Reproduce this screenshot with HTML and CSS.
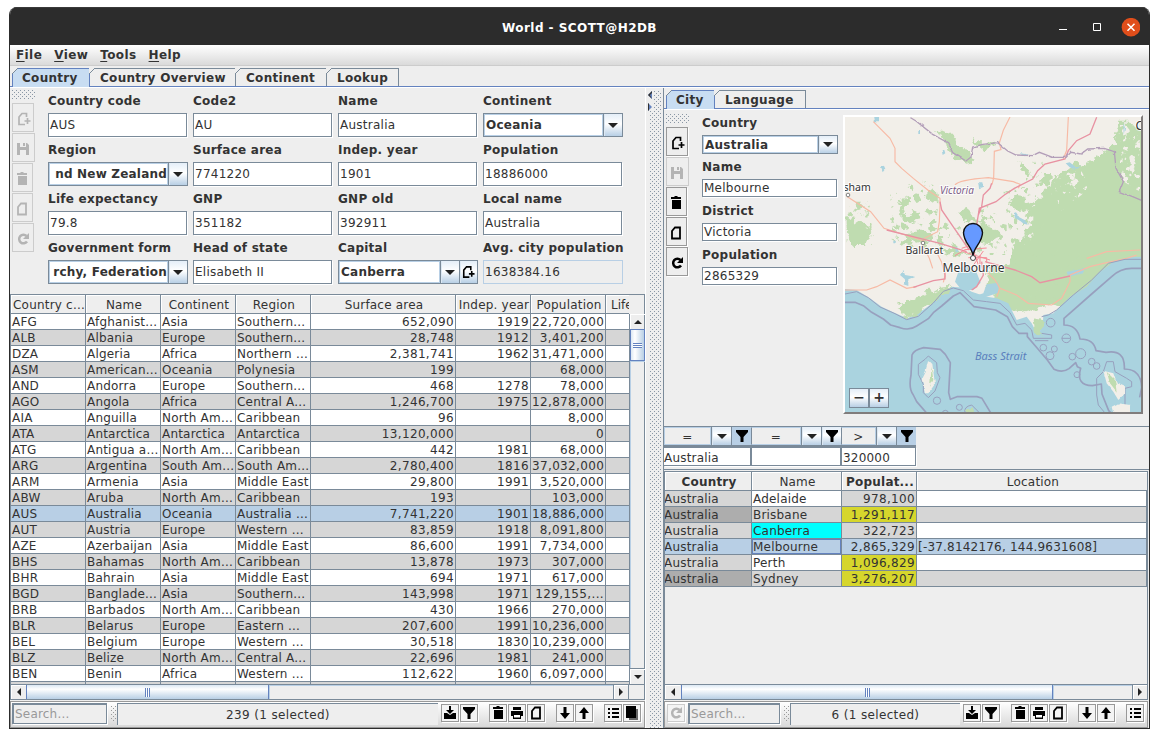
FILE: index.html
```html
<!DOCTYPE html>
<html lang="en">
<head>
<meta charset="utf-8">
<title>World - SCOTT@H2DB</title>
<link rel="stylesheet" href="styles.css">
</head>
<body>
<svg class="defs" width="0" height="0">
  <symbol id="add" viewBox="0 0 16 16"><path d="M10 13.500H4V6l3-3.500h4.500V6M12.500 7v6M9.500 10h6" fill="none" stroke="currentColor" stroke-width="1.700"/></symbol>
  <symbol id="page" viewBox="0 0 16 16"><path d="M4 13.500V6l3-3.500h5v11z" fill="none" stroke="currentColor" stroke-width="1.800"/></symbol>
  <symbol id="save" viewBox="0 0 16 16"><path d="M2 2h3v4h6V2h1l2 2v10h-3V9H5v5H2zM8 2h2v3H8z" fill="currentColor"/></symbol>
  <symbol id="trash" viewBox="0 0 16 16"><path d="M3 2h3l1-1h2l1 1h3v2H3zM4 5h9v9H4z" fill="currentColor"/></symbol>
  <symbol id="reload" viewBox="0 0 16 16"><path d="M11.500 5A4.300 4.300 0 1 0 12 10.500" fill="none" stroke="currentColor" stroke-width="2.500"/><path d="M14 2v6H8z" fill="currentColor"/></symbol>
  <symbol id="import" viewBox="0 0 16 16"><path d="M2 8h3l3 2 3-2h3v6H2zM7 1h2v4h3L8 9 4 5h3z" fill="currentColor"/></symbol>
  <symbol id="funnel" viewBox="0 0 16 16"><path d="M2 2h12v2L9.500 9v5h-3V9L2 4z" fill="currentColor"/></symbol>
  <symbol id="print" viewBox="0 0 16 16"><path d="M4 2h8v3H4zM2 6h12v5h-2v3H4v-3H2z" fill="currentColor"/><path d="M5 10h6v2.500H5z" fill="#fff"/></symbol>
  <symbol id="down" viewBox="0 0 16 16"><path d="M6.500 2h3v6H13l-5 6-5-6h3.500z" fill="currentColor"/></symbol>
  <symbol id="up" viewBox="0 0 16 16"><path d="M6.500 14h3V8H13L8 2 3 8h3.500z" fill="currentColor"/></symbol>
  <symbol id="list" viewBox="0 0 16 16"><path d="M3 3h2v2H3zM7 3h7v2H7zM3 7h2v2H3zM7 7h7v2H7zM3 11h2v2H3zM7 11h7v2H7z" fill="currentColor"/></symbol>
  <symbol id="copies" viewBox="0 0 16 16"><path d="M5 4h9v11H5z" fill="#666"/><path d="M2 1h10v12H2z" fill="currentColor"/></symbol>
  <symbol id="chev" viewBox="0 0 10 5"><path d="M0 0h10L5 5z" fill="#222"/></symbol>
</svg>

<div class="window">
  <header class="titlebar">
    <div class="title">World - SCOTT@H2DB</div>
    <svg class="winbtns" width="84" height="20" viewBox="0 0 84 20"><path d="M3 11.500h8" stroke="#fff"/><path d="M37.500 5.500h7v7h-7z" fill="none" stroke="#fff"/><circle cx="75" cy="9.200" r="9.300" fill="#e04e1b"/><path d="M71.500 5.700l7 7M78.500 5.700l-7 7" stroke="#fff" stroke-width="1.500"/></svg>
  </header>
  <nav class="menubar"><span><u>F</u>ile</span><span><u>V</u>iew</span><span><u>T</u>ools</span><span><u>H</u>elp</span></nav>
  <div class="tabs main-tabs"><div class="tab on w78">Country</div><div class="tab w146">Country Overview</div><div class="tab w91">Continent</div><div class="tab w72">Lookup</div></div>

  <main class="split">
    <section class="left">
      <div class="form-area">
        <div class="tools off">
          <i class="grip"></i>
          <b><svg><use href="#add"/></svg></b><b class="wide"><svg><use href="#save"/></svg></b><b class="slim"><svg><use href="#trash"/></svg></b><b class="slim"><svg><use href="#page"/></svg></b><b><svg><use href="#reload"/></svg></b>
        </div>
        <div class="form">
          <label>Country code<div class="field">AUS</div></label>
          <label>Code2<div class="field">AU</div></label>
          <label>Name<div class="field">Australia</div></label>
          <label>Continent<div class="combo"><div>Oceania</div><em><svg><use href="#chev"/></svg></em></div></label>
          <label>Region<div class="combo"><div class="end">nd New Zealand</div><em><svg><use href="#chev"/></svg></em></div></label>
          <label>Surface area<div class="field">7741220</div></label>
          <label>Indep. year<div class="field">1901</div></label>
          <label>Population<div class="field">18886000</div></label>
          <label>Life expectancy<div class="field">79.8</div></label>
          <label>GNP<div class="field">351182</div></label>
          <label>GNP old<div class="field">392911</div></label>
          <label>Local name<div class="field">Australia</div></label>
          <label>Government form<div class="combo"><div class="end">rchy, Federation</div><em><svg><use href="#chev"/></svg></em></div></label>
          <label>Head of state<div class="field">Elisabeth II</div></label>
          <label>Capital<div class="combo"><div>Canberra</div><em><svg><use href="#chev"/></svg></em><em class="addbtn"><svg><use href="#add"/></svg></em></div></label>
          <label>Avg. city population<div class="field readonly">1638384.16</div></label>
        </div>
      </div>
      <div class="table-box">
        <div class="thead country-cols"><span>Country c...</span><span>Name</span><span>Continent</span><span>Region</span><span>Surface area</span><span>Indep. year</span><span>Population</span><span class="cut">Life</span></div>
        <div class="tbody">
          <div class="rows" id="countries"></div>
          <div class="vscroll"><div class="arrow"><svg width="8" height="4" viewBox="0 0 8 4"><path d="M0 4h8L4 0z"/></svg></div><div class="vthumb"><i></i></div><div class="track"></div><div class="arrow bottom"><svg width="8" height="4" viewBox="0 0 8 4"><path d="M0 0h8L4 4z"/></svg></div></div>
        </div>
        <div class="hscroll"><div class="arrow"><svg width="4" height="8" viewBox="0 0 4 8"><path d="M4 0v8L0 4z"/></svg></div><div class="hthumb w243"><i></i></div><div class="track"></div><div class="arrow"><svg width="4" height="8" viewBox="0 0 4 8"><path d="M0 0v8l4-4z"/></svg></div><div class="corner"></div></div>
      </div>
      <div class="status">
        <div class="search w95">Search...</div><i class="minigrip"></i><div class="count">239 (1 selected)</div>
        <b><svg><use href="#import"/></svg></b><b><svg><use href="#funnel"/></svg></b>
        <b class="sep"><svg><use href="#trash"/></svg></b><b><svg><use href="#print"/></svg></b><b><svg><use href="#page"/></svg></b>
        <b class="sep"><svg><use href="#down"/></svg></b><b><svg><use href="#up"/></svg></b>
        <b class="sep"><svg><use href="#list"/></svg></b><b><svg><use href="#copies"/></svg></b>
      </div>
    </section>

    <div class="divider"><svg width="5" height="20" viewBox="0 0 5 20"><path d="M4 0v8L0 4z" fill="#6382bf"/><path d="M0 4l4-4v2L2 4l2 4z" fill="#333"/><path d="M0 12v8l4-4z" fill="#6382bf"/><path d="M0 12v8l1-1v-6z" fill="#333"/></svg><i></i></div>

    <section class="right">
      <div class="tabs sub-tabs"><div class="tab on w49">City</div><div class="tab w91">Language</div></div>
      <div class="city">
        <div class="tools">
          <i class="grip"></i>
          <b><svg><use href="#add"/></svg></b><b class="wide dis"><svg><use href="#save"/></svg></b><b class="slim"><svg><use href="#trash"/></svg></b><b class="slim"><svg><use href="#page"/></svg></b><b><svg><use href="#reload"/></svg></b>
        </div>
        <div class="city-form">
          <label>Country<div class="combo"><div>Australia</div><em><svg><use href="#chev"/></svg></em></div></label>
          <label>Name<div class="field">Melbourne</div></label>
          <label>District<div class="field">Victoria</div></label>
          <label>Population<div class="field">2865329</div></label>
        </div>
        <div class="map">
          <svg width="296" height="296" viewBox="845 117 296 296">
            <defs>
              <filter id="rough" x="-10%" y="-10%" width="120%" height="120%"><feTurbulence type="fractalNoise" baseFrequency=".04" numOctaves="4" seed="4"/><feDisplacementMap in="SourceGraphic" scale="38" xChannelSelector="R" yChannelSelector="G"/></filter>
              <filter id="wobble" x="-10%" y="-10%" width="120%" height="120%"><feTurbulence type="fractalNoise" baseFrequency=".05" numOctaves="3" seed="9"/><feDisplacementMap in="SourceGraphic" scale="9" xChannelSelector="R" yChannelSelector="G"/></filter>
              <filter id="speckle" x="0" y="0" width="100%" height="100%"><feTurbulence type="fractalNoise" baseFrequency=".045" numOctaves="4" seed="12"/><feColorMatrix values="0 0 0 0 0  0 0 0 0 0  0 0 0 0 0  14 0 0 0 -8"/><feComposite in="SourceGraphic" operator="in"/></filter>
            </defs>
            <rect x="845" y="117" width="296" height="296" fill="#f2efe9"/>
            <g transform="translate(840 105) scale(.33333)">
              <g filter="url(#rough)" fill="#bfdcb0">
                <path d="M915 80l-50-30-30 0-15 60-35 50-20-10-30 30-40-5-45 35-25 55-35 20-25 35-15 40 0 35-35 30-10 55-55 10-10 50 30 60 80 20 70-20 60 10 50-30 30-50 100-20h100z"/>
                <path d="M290 72l45 20 65 75-25 5-40-20zM395 90l20 25 50-5 5 10-60 15zM20 330l25 20 30 10 20 25-20 35-40 0-15-60zM185 330l50-10 10 25-40 10-20-10zM250 265l25-10 20 15-20 20zM200 380l50 0 40 5-10 20-40 5-40-10zM350 325l30-10 25 20-30 15zM415 355l45 10 20 20-20 30-40-5-20 20-10-30zM300 425l40 10 40 10-30 10-50-15zM545 180l20 0 10 30-15 10zM605 210l30 0 0 20-20 15zM520 270l30 5 20 35-30 10-30-20zM170 290l20-10 20 20-20 5zM660 205l50-15 20 10-30 20z"/>
              </g>
              <g filter="url(#speckle)">
                <path d="M20 290h75v130H20zM150 270l90-50 60 30-10 90 60 30 90-70 60 60v90H230l-80-50zM490 260l120-30 60 40-90 130-60 60zM530 170h80v60h-50z" fill="#bfdcb0"/>
                <path d="M840 60h60v200l-80-50zM640 220l80-30 30 60-90 70zM530 330l50 0 0 70-40 30z" fill="#f2efe9"/>
              </g>
              <g fill="#aad3df" filter="url(#wobble)"><path d="M102 30h15v22h-12zM122 185l10-3 4 10-8 10zM305 135l8 0 3 10-8 5zM235 75h5v12h-5zM415 235l12 0 2 10-12 5zM520 325l8-3 10 15 20 10 5 12-12-3-10-8-15-8zM677 175l12-3 15 12 20-2-20 9-15-4zM345 430l8-2 2 12-8 2zM540 145l25 3-8 6zM160 407h7v8h-7zM265 405h6v5h-6zM850 50l5 20-4 20z"/></g>
              <g fill="none" stroke="#f7baa5" stroke-width="3.500">
                <path d="M100 50l50 50 15 30v40l20 20 35 30 50 40 30 20 0 20-2 50-5 30-40 20-5 20 20 40 10 30M510 36l-20 40-12 38 5 20-20 5-2 80-5 20M685 36l-3 60-2 40-10 25M345 240q10-15 100-22l75 12 20 8-5 12M22 275l70 45 40 50 120 38M740 460l60-20 100-5"/>
              </g>
              <g fill="none" stroke="#e892a2" stroke-width="4">
                <path d="M770 37l-20 50-40 20-25 30-10 25-60 15-22 20-15 25-55 28-30 20-25 20-50 20-8 50 0 30M300 290l5 25 38 55 45 65M140 375l100 25 60 15 80 25M455 235l-5 15-20 20-5 35-10 25"/>
              </g>
              <path d="M208 36l20 12 50 40 45 25 15 30 40 25 15-12 5-30 30-8 45-5 30 25 25 12 50 2 20-10 40 15 40 0 15-15 30 5 20-15 50-2 30 10 5 50 22 40-12 30 40 15 35 15" fill="none" stroke="#b39fb9" stroke-width="4" filter="url(#wobble)"/>
            </g>
            <g transform="translate(840 255) scale(.33333)">
              <path d="M10 102L50 105 90 130 125 155 160 172 202 190 235 175 270 150 300 115 335 95 375 98 395 110 440 125 470 130 505 145 530 195 560 185 575 205 592 238 608 215 610 180 640 175 690 125 740 95 775 55 820 20 870 7 910 5V490H10z" fill="#aad3df"/>
              <path d="M358 42l20-12 30 18 14 35-22 22-35 0-20-25zM440 88l35-5 0 30-35 12-30 10-10-10 30-10z" fill="#aad3df"/>
              <path d="M180 60l10-15 5 15 30 5-20 8 0 20-15-5 5-15zM680 50l60-10-10 15-45 10z" fill="#aad3df" filter="url(#wobble)"/>
              <g filter="url(#rough)" fill="#bfdcb0">
                <path d="M175 150l60-20 50-30 45-5-10 20-50 30-60 45-25-10zM575 125l50-35 50-15 10 30-50 35-55 0zM520 10l150-15 50 5-70 50-60 20-55-20zM580 190l25 5 0 50-20-15z"/>
              </g>
              <g fill="none" stroke="#f7baa5" stroke-width="3.500"><path d="M10 105l70 0 30-10 40-20 50 25 30-5M440 50l25 25 15 25 50 20 35 25 70 5 30-20 25-50 0-20 60-25 40-10 70-15 30-10M290 -8l15 30 10 40-5 20M480 100l-10 25"/></g>
              <path d="M220 97l60-20 35-5 0-20M435 20l90 25 50 20 25 18 90-20M425 20l5 40-20 35-15 10" fill="none" stroke="#e892a2" stroke-width="4"/>
              <g fill="none" stroke="#f58c98" stroke-width="3"><path d="M345 2l30-18 65-5M370-10l80 25M365-20l30-10 20 60M430-12l-35 50M385 8l55 0 0 15M420 0v30"/></g>
              <g fill="none" stroke="#98a0be" stroke-width="5" stroke-linejoin="round">
                <path d="M10 142h35l25 10 25 20 35 20 22 18 28 8q28 10 50-5l35-22 15-18 25-20 35-30 20-10 22 22 20 20 65 10 35 20 15 30 20 20 25 0 0 10 30 35 30 35 20 28q25 12 45-2l20-18 5 12 10 5q-15 52 35 52l27-5 2 30 20 50 10 10M905 40l-30 0q-35 0-60 25l-60 52-83 73 0 20q40 0 48 42 42 0 48 35l30 5q58-10 55 50 50 0 52 55l-6 30"/>
                <path d="M265 480l-35-40-10-20q-15-20-7-60l3-60q5-15 35-22l50 5 15 15 15 25-5 90 5 20 20-8 60 0 15 5 30 50"/>
              </g>
              <g fill="none" stroke="#98a0be" stroke-width="3">
                <path d="M10 118l40-8 35 18 35 28 45 20 35 18 35-10 45-40 30-35 30-10 30 8 30 28 40 5 40 5 30 28 20 37 25-5 20 20 5 25 55 0 0-10-30-5M605 185l20-5 25-15 50-45 55-45 50-50 50-12 50 0"/>
                <circle cx="632" cy="203" r="13"/><circle cx="610" cy="278" r="10"/><circle cx="643" cy="282" r="9"/><circle cx="630" cy="302" r="12"/><circle cx="679" cy="250" r="13"/><circle cx="697" cy="305" r="10"/><circle cx="711" cy="359" r="9"/><circle cx="291" cy="437" r="11"/><circle cx="722" cy="296" r="15"/><circle cx="755" cy="320" r="10"/><circle cx="770" cy="333" r="10"/><circle cx="316" cy="475" r="9"/><circle cx="358" cy="457" r="9"/><path d="M665 250h26M585 257h40"/>
                <path d="M265 303l25 20 2 30 8 15-15 40-20 20-15-15 0-25-15-30 0-30 20-15zM800 320l20 0 5 30 35 20 15 10 0 15-20 5 0 60 15 25M800 320l-10 30-20 20v50l5 30 25 30M375 475q-5-20 20-25l25 25"/>
              </g>
              <g filter="url(#wobble)"><path d="M265 315l12 12 8 60-20 28-10 0-10-40 10-20zM790 347l30 8 10 30 25 10 0 20-20 20-15-25-20-25zM815 455l20-10 35 5 0 25-50 0z" fill="#f2efe9"/><path d="M800 350l25 25 5 35-20-25zM275 335l5 40-10 20z" fill="#bfdcb0"/><path d="M378 465l20-8 5 18-20 5z" fill="#bfdcb0"/></g>
            </g>
            <g class="labels">
              <text x="843.500" y="190.500">sham</text><text x="905.500" y="254">Ballarat</text><text class="city-name" x="942.500" y="271.800">Melbourne</text><text x="1135.500" y="130" class="city-name">C</text>
              <text class="state" x="940" y="193.500">Victoria</text><text class="sea" x="975" y="360">Bass Strait</text>
            </g>
            <g fill="#fff" stroke="#666" stroke-width=".8"><circle cx="848" cy="195" r="1.800"/><circle cx="923" cy="243" r="1.800"/></g>
            <path d="M973 256.500c0-9-9.500-13.500-9.500-24a9.500 9 0 0 1 19 0c0 10.500-9.500 15-9.500 24z" fill="#6699ff" stroke="#111" stroke-width="1.400"/><circle cx="973" cy="258" r="2.500" fill="#fff" stroke="#444"/>
          </svg>
          <div class="zoom"><span>−</span><span>+</span></div>
        </div>
      </div>
      <div class="filters">
        <div class="filter"><div class="op"><span>=</span><em><svg><use href="#chev"/></svg></em><em class="fn on"><svg><use href="#funnel"/></svg></em></div><div class="field">Australia</div></div>
        <div class="filter"><div class="op"><span>=</span><em><svg><use href="#chev"/></svg></em><em class="fn"><svg><use href="#funnel"/></svg></em></div><div class="field"></div></div>
        <div class="filter"><div class="op"><span>&gt;</span><em><svg><use href="#chev"/></svg></em><em class="fn on"><svg><use href="#funnel"/></svg></em></div><div class="field">320000</div></div>
      </div>
      <div class="table-box cities">
        <div class="thead city-cols"><span class="strong">Country</span><span>Name</span><span class="strong">Populat...</span><span>Location</span></div>
        <div class="rows" id="cities"></div>
        <div class="spacer"></div>
        <div class="hscroll"><div class="arrow"><svg width="4" height="8" viewBox="0 0 4 8"><path d="M4 0v8L0 4z"/></svg></div><div class="hthumb w372"><i></i></div><div class="track"></div><div class="arrow"><svg width="4" height="8" viewBox="0 0 4 8"><path d="M0 0v8l4-4z"/></svg></div></div>
      </div>
      <div class="status">
        <b class="dis first"><svg><use href="#reload"/></svg></b><div class="search w92">Search...</div><i class="minigrip"></i><div class="count">6 (1 selected)</div>
        <b><svg><use href="#import"/></svg></b><b><svg><use href="#funnel"/></svg></b>
        <b class="sep"><svg><use href="#trash"/></svg></b><b><svg><use href="#print"/></svg></b><b><svg><use href="#page"/></svg></b>
        <b class="sep"><svg><use href="#down"/></svg></b><b><svg><use href="#up"/></svg></b>
        <b class="sep"><svg><use href="#list"/></svg></b>
      </div>
    </section>
  </main>
</div>
<script src="tables.js"></script>
</body>
</html>
```
FILE: styles.css
```css
* { box-sizing: border-box; }
body { margin: 0; padding: 7px 0 0 9px; background: #fff; font: 12px/16px "DejaVu Sans", sans-serif; letter-spacing: .2px; color: #333; overflow: hidden; }
svg { display: block; }
.defs { position: absolute; }
i, em { font-style: normal; }
.window { width: 1141px; height: 722px; display: flex; flex-direction: column; background: #eee; border: 1px solid #2c2c2c; border-top: 0; border-radius: 8px 8px 0 0; overflow: hidden; }
.titlebar { height: 38px; flex: none; background: #2c2c2c; border-top: 1px solid #3a3a3a; color: #fff; display: grid; grid-template-columns: 1fr auto 1fr; align-items: center; font-weight: bold; letter-spacing: .45px; padding-top: 2px; }
.title { grid-column: 2; }
.winbtns { justify-self: end; margin-right: 9px; }
.menubar { height: 21px; flex: none; background: linear-gradient(#fff, #dadada); border-bottom: 1px solid #ccc; display: flex; gap: 12px; padding-left: 6px; font-weight: bold; line-height: 21px; letter-spacing: .4px; }
.menubar u { text-underline-offset: 2px; }
.tabs { display: flex; flex: none; height: 21px; padding: 2px 0 0 2px; border-bottom: 1px solid #6382bf; font-weight: bold; letter-spacing: .3px; }
.tab { position: relative; height: 18px; border: 1px solid #7a8a99; border-width: 1px 1px 0 0; padding-left: 10px; line-height: 18px; white-space: nowrap; }
.tab::before { content: ""; position: absolute; left: -1px; top: -1px; width: 6px; height: 6px; background: linear-gradient(135deg, #eee 46%, #7a8a99 46%, #7a8a99 56%, transparent 56%); }
.tab.on { height: 19px; background: #c8ddf2; border-color: #6382bf; border-left-width: 1px; padding-left: 9px; }
.w78 { width: 78px; } .w146 { width: 146px; } .w91 { width: 91px; } .w72 { width: 72px; } .w49 { width: 49px; }
.split { flex: 1; display: grid; grid-template-columns: 636px 17px 1fr; grid-template-rows: minmax(0, 1fr); min-height: 0; border-top: 1px solid #fff; }
.left, .right { display: flex; flex-direction: column; min-width: 0; min-height: 0; }
.left { border-right: 1px solid #fff; }
.form-area { height: 206px; flex: none; display: flex; }
.tools { width: 26px; flex: none; padding: 2px 0 0 2px; }
.tools .grip { display: block; width: 24px; height: 10px; margin-bottom: 3px; }
.grip, .divider i { background-image: radial-gradient(circle at .5px .5px, #8a97a5 .6px, transparent .7px), radial-gradient(circle at 2.5px 2.5px, #8a97a5 .6px, transparent .7px); background-size: 4px 4px; }
.tools b { display: flex; width: 22px; height: 29px; margin-bottom: 1px; border: 1px solid #999; box-shadow: 1px 1px #fff; align-items: center; justify-content: center; color: #000; }
.tools b.wide { width: 23px; } .tools b.slim { width: 21px; }
.tools svg { width: 16px; height: 16px; flex: none; margin: 2px 1px 0 0; }
.tools.off b, .tools b.dis { border-color: #ccc; box-shadow: none; color: #b4b4b4; }
.form { display: grid; grid-template-columns: repeat(4, 140px); grid-auto-rows: 45px; gap: 4px 5px; padding: 4px 0 0 12px; }
label { display: block; font-weight: bold; line-height: 19px; white-space: nowrap; letter-spacing: .25px; }
.field { height: 24px; margin-top: 2px; background: #fff; border: 1px solid #7a8a99; box-shadow: inset -1px -1px #fff, 1px 1px #fff; font-weight: normal; line-height: 22px; padding-left: 1px; width: 139px; }
.readonly { background: #eee; border-color: #b8cfe5; box-shadow: none; width: 140px; }
.combo { height: 24px; margin-top: 2px; display: flex; border: 1px solid #7a8a99; background: #fff; }
.combo > div { flex: 1; border: 1px solid #b8cfe5; line-height: 20px; padding-left: 1px; overflow: hidden; display: flex; }
.combo > .end { justify-content: flex-end; letter-spacing: .2px; }
em { width: 19px; flex: none; border-left: 1px solid #7a8a99; background: linear-gradient(#e4eef8, #fff 45%, #b8cfe5); display: flex; align-items: center; justify-content: center; box-shadow: inset 1px 0 #dce8f3; }
em svg { width: 10px; height: 5px; }
em.addbtn { width: 18px; } em.addbtn svg { width: 16px; height: 16px; color: #000; margin-right: 2px; }
.table-box { flex: 1; min-height: 0; display: flex; flex-direction: column; border: 1px solid #7a8a99; width: 635px; }
.thead { display: grid; height: 19px; flex: none; text-align: center; line-height: 20px; }
.thead span { border-right: 1px solid #7a8a99; border-bottom: 1px solid #7a8a99; box-shadow: inset 1px 1px #fff; overflow: hidden; white-space: nowrap; padding-left: 2px; }
.country-cols { grid-template-columns: 75px 75px 75px 75px 145px 75px 75px 23px; }
.thead .cut { border-right: 0; text-align: left; padding-left: 5px; letter-spacing: 0; }
.tbody { display: flex; flex: 1; min-height: 0; }
.rows { width: 618px; overflow: hidden; flex: none; }
.row { display: grid; height: 16px; background: #fff; }
.row:nth-child(even) { background: #d6d6d6; }
.row.sel { background: #b8cfe5; }
.row span { border-right: 1px solid #7a8a99; border-bottom: 1px solid #7a8a99; line-height: 16px; padding: 0 1px; overflow: hidden; white-space: nowrap; }
.row .num { text-align: right; letter-spacing: .35px; }
.row.country-cols span:last-child { border-right: 0; }
.vscroll { flex: 1; border-left: 1px solid #7a8a99; display: flex; flex-direction: column; }
.arrow { flex: none; width: 15px; height: 14px; display: flex; align-items: center; justify-content: center; box-shadow: inset 1px 1px #fff; fill: #222; }
.vscroll .arrow { height: 15px; }
.vscroll .bottom { height: 16px; border-top: 1px solid #7a8a99; }
.vthumb { height: 32px; border: 1px solid #6382bf; background: linear-gradient(90deg, #dce8f4, #fff 30%, #b8cfe5); display: flex; align-items: center; justify-content: center; }
.vthumb i { width: 9px; height: 5px; background: repeating-linear-gradient(#6382bf 0 1px, #fff 1px 2px); }
.track { flex: 1; box-shadow: inset 1px 1px #b8cfe5; }
.hscroll { height: 15px; flex: none; border-top: 1px solid #7a8a99; display: flex; }
.hthumb { border: 1px solid #6382bf; border-width: 0 1px; background: linear-gradient(#dce8f4, #fff 30%, #b8cfe5); display: flex; align-items: center; justify-content: center; }
.hthumb i { width: 5px; height: 9px; background: repeating-linear-gradient(90deg, #6382bf 0 1px, #fff 1px 2px); }
.hscroll .track + .arrow { border-left: 1px solid #7a8a99; }
.w243 { width: 243px; } .w372 { width: 372px; margin-left: 1px; }
.corner { width: 16px; border-left: 1px solid #7a8a99; }
.status { height: 27px; flex: none; margin-top: 1px; display: flex; align-items: flex-start; border: 1px solid #999; background: linear-gradient(#fff, #d8d8d8); padding: 1px 3px 0 1px; width: 635px; }
.status b { display: flex; align-items: center; justify-content: center; width: 18px; height: 18px; margin: 1px 0 0 1px; border: 1px solid #999; background: #f4f4f4; box-shadow: 1px 1px #fff; color: #000; flex: none; }
.status b.sep { margin-left: 11px; } .status b.first { margin-right: 3px; }
.status b svg { width: 16px; height: 16px; flex: none; }
.status b.dis { color: #b4b4b4; border-color: #ccc; }
.search { height: 21px; border: 1px solid #7a8a99; border-width: 2px 1px 1px 2px; background: #eee; color: #999; line-height: 19px; padding-left: 1px; box-shadow: 1px 1px #fff; }
.w95 { width: 95px; } .w92 { width: 92px; }
.minigrip { width: 5px; height: 16px; margin: 3px 1px 0 4px; background-image: radial-gradient(circle at .5px .5px, #999 .6px, transparent .7px), radial-gradient(circle at 2.5px 2.5px, #999 .6px, transparent .7px); background-size: 4px 4px; }
.count { flex: 1; height: 22px; border: 1px solid #7a8a99; border-width: 1px 0 0 1px; background: #eee; text-align: center; line-height: 22px; margin-right: 2px; letter-spacing: .35px; }
.divider { padding: 3px 0 0 2px; display: flex; }
.divider svg { position: relative; flex: none; width: 5px; background: #eee; }
.divider i { flex: 1; margin: 0 1px 0 -3px; }
.right { border-left: 1px solid #7a8a99; }
.city { height: 317px; flex: none; display: flex; border-top: 1px solid #fff; }
.city .tools { padding-top: 4px; }
.city-form { width: 136px; margin: 5px 0 0 12px; }
.city-form label { height: 44px; line-height: 16px; }
.city-form .field { height: 18px; line-height: 17px; width: 135px; margin-top: 4px; }
.city-form .combo { height: 19px; margin-top: 4px; }
.city-form .combo > div { line-height: 16px; }
.map { position: relative; width: 300px; height: 299px; margin: 5px 0 0 5px; border: 2px solid #fff; border-right-color: #807c7c; border-bottom-color: #807c7c; overflow: hidden; }
.labels text { font: 10.500px "Noto Sans", sans-serif; letter-spacing: 0; fill: #333; stroke: #fff; stroke-opacity: .8; stroke-width: 2px; paint-order: stroke; }
.labels .city-name { font-size: 12px; }
.labels .state { font-style: italic; font-size: 10px; fill: #7d5d87; }
.labels .sea { font-style: italic; font-size: 11px; fill: #5a7fbd; stroke: none; }
.zoom { position: absolute; left: 4px; bottom: 4px; display: flex; }
.zoom span { width: 20px; height: 20px; border: 1px solid #7a8a99; background: linear-gradient(#e4eef8, #fff 45%, #b8cfe5); text-align: center; line-height: 17px; font-size: 14px; font-weight: bold; letter-spacing: 0; }
.filters { height: 44px; flex: none; display: grid; grid-template-columns: 87px 90px 75px; border-top: 1px solid #7a8a99; border-bottom: 1px solid #7a8a99; }
.op { height: 20px; display: flex; border: 1px solid #7a8a99; border-width: 0 0 2px; }
.op span { flex: 1; border: 1px solid #b8cfe5; text-align: center; line-height: 18px; }
.op em { width: 20px; }
.fn svg { width: 16px; height: 16px; color: #000; }
.op em.on { background: #b8cfe5; box-shadow: none; }
.filter + .filter .op span { border-left-color: #7a8a99; }
.filters .field { width: 100%; height: 19px; margin: 0; line-height: 20px; padding-left: 1px; }
.filter:first-child .field { border-left: 0; padding-left: 0; }
.cities { width: 484px; margin-top: 1px; }
.city-cols { grid-template-columns: 87px 90px 75px 1fr; }
.cities .thead span:last-child { border-right: 0; }
.strong { font-weight: bold; }
.cities .rows { width: auto; }
.cities .row span:first-child { background: #d6d6d6; padding: 0; text-indent: -1px; }
.cities .row:nth-child(even) span:first-child { background: #adadad; }
.cities .row.sel span:first-child, .cities .row.sel .num { background: #b8cfe5; }
.cities .num { background: #d6d6d6; }
.cities .row .hot { background: #d6d62c; }
.cities .row .capital { background: #0ff; }
.cities .row .focus { box-shadow: inset 0 0 0 1px #6382bf; }
.spacer { flex: 1; }
.right .status { width: 484px; }
```
FILE: tables.js
```js
const countries = `AFG|Afghanist...|Asia|Southern...|652,090|1919|22,720,000
ALB|Albania|Europe|Southern...|28,748|1912|3,401,200
DZA|Algeria|Africa|Northern ...|2,381,741|1962|31,471,000
ASM|American...|Oceania|Polynesia|199||68,000
AND|Andorra|Europe|Southern...|468|1278|78,000
AGO|Angola|Africa|Central A...|1,246,700|1975|12,878,000
AIA|Anguilla|North Am...|Caribbean|96||8,000
ATA|Antarctica|Antarctica|Antarctica|13,120,000||0
ATG|Antigua a...|North Am...|Caribbean|442|1981|68,000
ARG|Argentina|South Am...|South Am...|2,780,400|1816|37,032,000
ARM|Armenia|Asia|Middle East|29,800|1991|3,520,000
ABW|Aruba|North Am...|Caribbean|193||103,000
AUS|Australia|Oceania|Australia ...|7,741,220|1901|18,886,000
AUT|Austria|Europe|Western ...|83,859|1918|8,091,800
AZE|Azerbaijan|Asia|Middle East|86,600|1991|7,734,000
BHS|Bahamas|North Am...|Caribbean|13,878|1973|307,000
BHR|Bahrain|Asia|Middle East|694|1971|617,000
BGD|Banglade...|Asia|Southern...|143,998|1971|129,155,...
BRB|Barbados|North Am...|Caribbean|430|1966|270,000
BLR|Belarus|Europe|Eastern ...|207,600|1991|10,236,000
BEL|Belgium|Europe|Western ...|30,518|1830|10,239,000
BLZ|Belize|North Am...|Central A...|22,696|1981|241,000
BEN|Benin|Africa|Western ...|112,622|1960|6,097,000
||||||`.split("\n").map(line => line.split("|"));

document.getElementById("countries").innerHTML = countries.map(r =>
  `<div class="row country-cols${r[0] === "AUS" ? " sel" : ""}">` +
  r.map((v, i) => `<span class="${i > 3 ? "num" : ""}">${v}</span>`).join("") +
  "<span></span></div>").join("");

const cities = [
  ["Adelaide", "", "978,100", "", ""],
  ["Brisbane", "", "1,291,117", "hot", ""],
  ["Canberra", "capital", "322,723", "", ""],
  ["Melbourne", "focus", "2,865,329", "", "[-37.8142176, 144.9631608]"],
  ["Perth", "", "1,096,829", "hot", ""],
  ["Sydney", "", "3,276,207", "hot", ""]
];
document.getElementById("cities").innerHTML = cities.map(c =>
  `<div class="row city-cols${c[4] ? " sel" : ""}"><span>Australia</span><span class="${c[1]}">${c[0]}</span>` +
  `<span class="num ${c[3]}">${c[2]}</span><span>${c[4]}</span></div>`).join("");
```
